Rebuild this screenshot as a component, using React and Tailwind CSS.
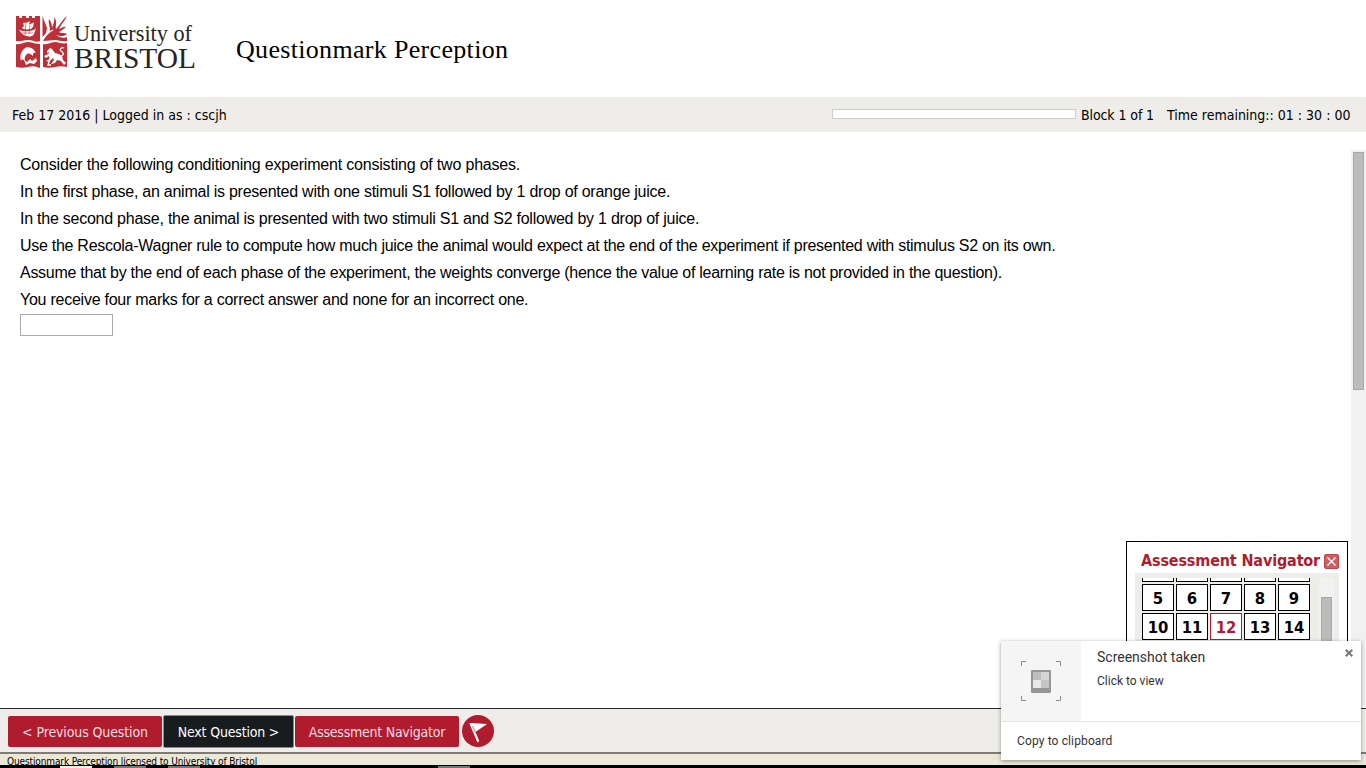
const paragraphs = [
  { text: 'Consider the following conditioning experiment consisting of two phases.', cls: 'tracking-[-0.194px]' },
  { text: 'In the first phase, an animal is presented with one stimuli S1 followed by 1 drop of orange juice.', cls: 'tracking-[-0.245px]' },
  { text: 'In the second phase, the animal is presented with two stimuli S1 and S2 followed by 1 drop of juice.', cls: 'tracking-[-0.244px]' },
  { text: 'Use the Rescola-Wagner rule to compute how much juice the animal would expect at the end of the experiment if presented with stimulus S2 on its own.', cls: 'tracking-[-0.277px]' },
  { text: 'Assume that by the end of each phase of the experiment, the weights converge (hence the value of learning rate is not provided in the question).', cls: 'tracking-[-0.278px]' },
  { text: 'You receive four marks for a correct answer and none for an incorrect one.', cls: 'tracking-[-0.25px]' },
];

function Crest() {
  return (
    <svg width="52" height="52" viewBox="0 0 52 52" className="shrink-0">
      <g fill="#bf2f38">
        <path d="M0 0H3V2H6V0H10V2H13V0H16V2H19V0H24V25C20 27 17 24 12 24C7 24 4 26 0 25Z" />
        <path d="M26.5 0C28 5 30 8 31 12L30 17L26.5 21ZM27 25C29 21 31 18 34 15C34 10 32 7 33 3C35 6 36 8 36 12C37 8 39 6 38 1C42 6 39 10 40 13C44 9 46 4 51 0C49 5 45 8 43 13C45 13 48 10 50 11C48 13 46 14 43 16C46 18 48 16 51 18C48 21 43 20 40 19C43 21 47 23 51 21V25C46 26 43 24 39 24C35 24 32 25 27 25Z" />
        <path d="M0 28C5 29 8 26 13 26C18 27 21 28 24 28V52C19 50 16 50 12 51C8 52 4 52 0 51Z" />
        <path d="M27 28C32 29 35 26 40 26C44 27 48 28 51 27V51C47 50 43 50 39 51C35 52 31 52 27 51Z" />
      </g>
      <path d="M27 23C30 19 33 16 37 14" stroke="#fff" strokeWidth="1.3" fill="none" />
      <g fill="#fff">
        <path d="M7 7C10 7 13 6 14 5L13 8C15 8 17 7 18 6L17 11L15 13C9 14 7 13 6 12L8 10Z" />
        <path d="M3 14C6 15 10 16 18 14L20 12L18 18C17 20 15 21 10 20C7 19 5 17 3 14Z" />
        <path d="M5 45C3 39 6 33 11 31C15 31 18 33 20 37C18 36 17 36 17 40C15 38 13 37 11 38C9 40 8 42 9 45L6 43Z" />
        <path d="M8 44L11 46L14 43L16 45L20 42L21 45L18 48L14 47L10 49Z" />
      </g>
      <path d="M10 7L9 19M14 8L13 18M6 17L17 17" stroke="#bf2f38" strokeWidth=".6" fill="none" />
      <g fill="#fff">
        <path d="M31 35L34 32L36 33L39 37C42 38 44 38 46 40L47 44L50 47L48 49L45 45L41 44L39 47L35 48L38 44L37 42L33 46L30 45L34 43L33 40L30 42L28 40L32 38L34 36L31 37Z" />
      </g>
      <path d="M45 40C49 39 47 36 45 35C43 33 46 31 48 32M34 42L32 49H35" stroke="#fff" strokeWidth="1.3" fill="none" />
    </svg>
  );
}

function Header() {
  return (
    <header className="flex h-[97px] shrink-0 items-start pt-4 pl-4">
      <Crest />
      <svg width="124" height="60" className="ml-[6px] shrink-0" fill="#252525" fontFamily="Liberation Serif, serif">
        <text x="0" y="25" fontSize="23" textLength="118" lengthAdjust="spacingAndGlyphs">University of</text>
        <text x="0" y="51.5" fontSize="30" textLength="122" lengthAdjust="spacingAndGlyphs">BRISTOL</text>
      </svg>
      <h1 className="mt-[17px] ml-[38px] font-['Liberation_Serif',serif] text-[26px] leading-[34px] tracking-[0.32px] whitespace-nowrap">Questionmark Perception</h1>
    </header>
  );
}

function StatusBar() {
  return (
    <div className="flex h-[35px] shrink-0 items-center bg-[#eeede9] pr-[15px] pl-3 font-['DejaVu_Sans_Condensed','DejaVu_Sans',sans-serif] [font-stretch:semi-condensed] text-[14px] whitespace-nowrap">
      <span className="pt-px">Feb 17 2016 | Logged in as : cscjh</span>
      <div className="mb-[2px] ml-auto h-[10px] w-[244px] border border-[#ccc] bg-white" />
      <span className="ml-[5px] w-[86px] pt-px tracking-[-0.1px]">Block 1 of 1</span>
      <span className="w-[184px] pt-px">Time remaining:: 01 : 30 : 00</span>
    </div>
  );
}

function Question() {
  return (
    <main className="flex h-[576px] shrink-0 pt-[18px]">
      <div className="min-w-0 flex-1 pt-[1px] pl-5 font-['Liberation_Sans',sans-serif] text-[16px] leading-[27px]">
        {paragraphs.map((p) => (
          <p key={p.text} className={`whitespace-nowrap ${p.cls}`}>{p.text}</p>
        ))}
        <input className="mt-[1px] block h-[22px] w-[93px] border border-[#a9a9a9] bg-white" />
      </div>
      <div className="mb-[2px] w-[15px] bg-[#f1f1f1] pt-[2px] pl-[2px]">
        <div className="h-[238px] w-[11px] border border-[#a8a8a8] bg-[#bcbcbc]" />
      </div>
    </main>
  );
}

function Toolbar() {
  return (
    <div className="flex h-[44px] shrink-0 items-start border-t border-[#25282a] bg-[#eeede9] pt-[6px] pl-2 font-['DejaVu_Sans_Condensed','DejaVu_Sans',sans-serif] [font-stretch:semi-condensed] text-[14px] text-[#f7dde0]">
      <button className="mt-[1px] h-[31px] w-[154px] rounded-[2px] bg-[#b01c2e] pt-px tracking-[-0.12px] whitespace-nowrap">&lt; Previous Question</button>
      <button className="ml-[1px] h-[33px] w-[131px] rounded-[2px] border border-[#5b8fe0] bg-[#171c1f] pt-px tracking-[-0.18px] whitespace-nowrap text-white">Next Question &gt;</button>
      <button className="mt-[1px] ml-[1px] h-[31px] w-[164px] rounded-[2px] bg-[#b01c2e] pt-px tracking-[-0.24px] whitespace-nowrap">Assessment Navigator</button>
      <svg width="32" height="32" className="ml-[3px]" viewBox="0 0 32 32">
        <circle cx="16" cy="16" r="16" fill="#b01c2e" />
        <path d="M7.5 8L9.5 8L25 9L13.5 17L17.2 26L15.5 27.5L8 10Z" fill="#fff" />
        <path d="M10.5 11L13.5 17.5" stroke="#b01c2e" strokeWidth=".6" />
      </svg>
    </div>
  );
}

function Footer() {
  return (
    <footer className="shrink-0">
      <div className="h-[13px] border-t-2 border-[#7d7b74] bg-[#ebe8d7] pl-[7px] font-['DejaVu_Sans_Condensed','DejaVu_Sans',sans-serif] [font-stretch:semi-condensed] text-[10px] leading-[15px] tracking-[-0.12px] whitespace-nowrap">
        Questionmark Perception licensed to University of Bristol
      </div>
      <div className="relative flex h-[3px] items-end bg-black pl-[60px]">
        <i className="h-[2px] w-8 bg-[#eee]" />
        <i className="ml-[22px] h-[2px] w-8 bg-[#777]" />
        <i className="ml-[22px] h-[2px] w-8 bg-[#777]" />
        <i className="ml-[238px] h-[2px] w-8 bg-[#777]" />
      </div>
    </footer>
  );
}

function Navigator() {
  return (
    <section className="absolute top-[541px] left-[1126px] h-[140px] w-[222px] border border-black bg-white px-2 pt-2 font-['DejaVu_Sans_Condensed','DejaVu_Sans',sans-serif] [font-stretch:semi-condensed]">
      <div className="flex h-[23px] items-center pl-[6px]">
        <h2 className="-mt-[2px] w-[183px] text-[16px] font-bold tracking-[-0.15px] whitespace-nowrap text-[#b01c2e]">Assessment Navigator</h2>
        <svg width="15" height="15" viewBox="0 0 15 15" className="shrink-0">
          <rect x=".5" y=".5" width="14" height="14" rx="1.5" fill="#d45c60" stroke="#b8474c" />
          <path d="M3.5 3.5L11.5 11.5M11.5 3.5L3.5 11.5" stroke="#fff" strokeWidth="1.3" />
        </svg>
      </div>
      <div className="flex h-[108px] bg-[#eeede9] pt-[5px] pl-[7px]">
        <div className="h-[70px] w-[168px] overflow-hidden">
          <div className="-mt-[23px] grid grid-cols-5 gap-[2px] text-center text-[16.5px] leading-[27px] font-bold">
            {['', '', '', '', '', 5, 6, 7, 8, 9, 10, 11, 12, 13, 14].map((n, i) => (
              <div key={i} className={n === 12 ? 'h-[27px] border border-[#b01c2e] bg-white text-[#b01c2e]' : 'h-[27px] border border-black bg-white'}>{n}</div>
            ))}
          </div>
        </div>
        <div className="ml-[9px] w-[15px] bg-[#f1f1f1] pt-[19px] pl-[2px]">
          <div className="h-[80px] w-[11px] border border-[#a8a8a8] bg-[#bcbcbc]" />
        </div>
      </div>
    </section>
  );
}

function Toast() {
  return (
    <section className="absolute top-[641px] left-[1001px] h-[119px] w-[360px] bg-white font-['Roboto',sans-serif] text-[#333] shadow-[0_1px_4px_rgba(0,0,0,0.4)]">
      <div className="flex h-[80px]">
        <div className="flex w-20 items-center justify-center bg-[#f5f5f5]">
          <svg width="40" height="40" viewBox="0 0 40 40">
            <path d="M.5 5V.5H5M35 .5H39.5V5M.5 35V39.5H5M35 39.5H39.5V35" fill="none" stroke="#8b8b8b" />
            <rect x="10" y="9" width="20" height="23" rx="1" fill="#969696" />
            <path d="M12 11H20V19H12Z" fill="#bdbdbd" />
            <path d="M20 11H28V19H20Z" fill="#d5d5d5" />
            <path d="M12 19H20V27H12Z" fill="#e8e8e8" />
            <path d="M20 19H28V27H20Z" fill="#c5c5c5" />
          </svg>
        </div>
        <div className="flex-1 pt-[6px] pl-4">
          <div className="text-[14px] leading-5">Screenshot taken</div>
          <div className="mt-[5px] text-[12px] leading-[18px]">Click to view</div>
        </div>
        <svg width="8" height="8" viewBox="0 0 8 8" className="mt-2 mr-2">
          <path d="M.7 .7L7.3 7.3M7.3 .7L.7 7.3" stroke="#777" strokeWidth="2" />
        </svg>
      </div>
      <div className="h-[39px] border-t border-[#e5e5e5] pl-4 text-[12px] leading-[38px] tracking-[0.13px]">Copy to clipboard</div>
    </section>
  );
}

export default function App() {
  return (
    <div className="relative flex h-[768px] w-[1366px] flex-col overflow-hidden bg-white text-black">
      <Header />
      <StatusBar />
      <Question />
      <Toolbar />
      <Footer />
      <Navigator />
      <Toast />
    </div>
  );
}
